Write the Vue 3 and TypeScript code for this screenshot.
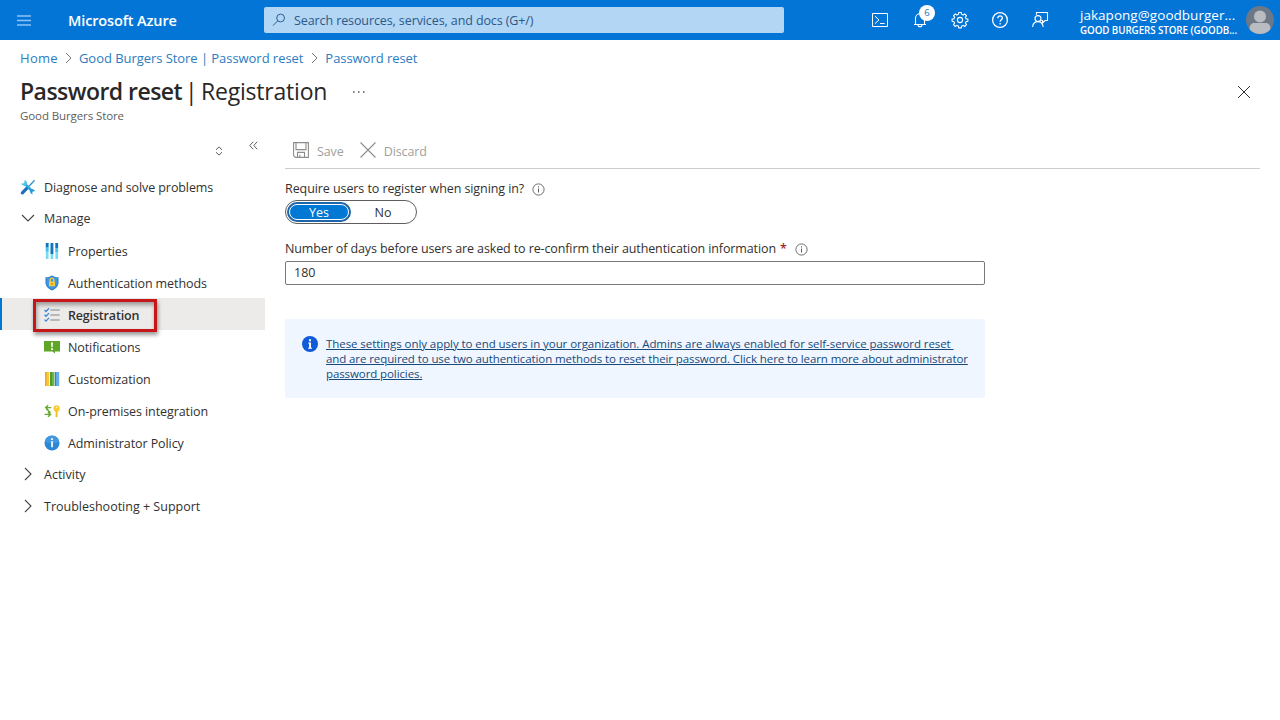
<script setup lang="ts">
import { ref } from 'vue'

interface NavItem { label: string; icon: string }

const items: NavItem[] = [
  { label: 'Properties', icon: 'bars' },
  { label: 'Authentication methods', icon: 'shield' },
  { label: 'Registration', icon: 'checks' },
  { label: 'Notifications', icon: 'alert' },
  { label: 'Customization', icon: 'books' },
  { label: 'On-premises integration', icon: 'sync' },
  { label: 'Administrator Policy', icon: 'info' },
]
const sections: string[] = ['Activity', 'Troubleshooting + Support']
const active = ref('Registration')
const required = ref(true)
const days = ref('180')
</script>

<template>
  <div class="page">
    <header class="topbar">
      <svg class="burger" width="14" height="11" viewBox="0 0 14 11"><path d="M0 1h14M0 5.5h14M0 10h14" stroke="#8fc4f3" stroke-width="1.5" /></svg>
      <span class="brand">Microsoft Azure</span>
      <div class="search">
        <svg width="14" height="14" viewBox="0 0 14 14" fill="none" stroke="#2b5f95"><circle cx="8.6" cy="5" r="3.9" /><path d="M5.8 7.8 1 12.6" /></svg>
        <span>Search resources, services, and docs (G+/)</span>
      </div>
      <div class="actions">
        <svg width="40" height="40" viewBox="0 0 40 40" fill="none" stroke="#fff"><path d="M12.5 13.5h15v13h-15zM15 16.2l4 3.7-4 3.7M20 23.5h4.6" /></svg>
        <div class="bell">
          <svg width="40" height="40" viewBox="0 0 40 40" fill="none" stroke="#fff" stroke-width="1.1"><path d="M14 24.5h12M15.5 24.2V18.2a4.5 4.5 0 0 1 9 0v6M18 24.7a2 2 0 0 0 4 0" /></svg>
          <span class="badge">6</span>
        </div>
        <svg width="40" height="40" viewBox="0 0 40 40" fill="none" stroke="#fff" stroke-width="1.1" stroke-linejoin="round"><circle cx="20" cy="20" r="2.6" /><path d="M18.7 12.5h2.6l.3 1.8 1.6.7 1.5-1.1 1.8 1.8-1.1 1.5.7 1.6 1.8.3v2.2l-1.8.3-.7 1.6 1.1 1.5-1.8 1.8-1.5-1.1-1.6.7-.3 1.8h-2.6l-.3-1.8-1.6-.7-1.5 1.1-1.8-1.8 1.1-1.5-.7-1.6-1.8-.3v-2.2l1.8-.3.7-1.6-1.1-1.5 1.8-1.8 1.5 1.1 1.6-.7z" /></svg>
        <svg width="40" height="40" viewBox="0 0 40 40" fill="none" stroke="#fff" stroke-width="1.3"><circle cx="20" cy="20" r="7.4" /><path d="M17.8 18.3c0-3.2 4.6-3.1 4.6-.3 0 1.7-2.3 1.9-2.3 3.8M20.1 23v1.5" /></svg>
        <svg width="40" height="40" viewBox="0 0 40 40" fill="none" stroke="#fff" stroke-width="1.1"><path d="M16.5 14.8v-2.3h11v8h-2.3L22.6 23v-2.5h-1.3" /><circle cx="18" cy="18.6" r="3" /><path d="M12.6 27c.3-3.5 2.4-5.4 5.4-5.4 2.9 0 4.8 1.9 5.2 5.4" /></svg>
      </div>
      <div class="account">
        <span class="mail">jakapong@goodburger...</span>
        <span class="tenant">GOOD BURGERS STORE (GOODB...</span>
      </div>
      <svg class="avatar" width="28" height="28" viewBox="0 0 28 28">
        <defs><clipPath id="avatar-clip"><circle cx="14" cy="14" r="14" /></clipPath></defs>
        <g clip-path="url(#avatar-clip)"><rect width="28" height="28" fill="#6d7887" /><circle cx="14" cy="10.5" r="6" fill="#b9bdc1" /><path d="M3.6 28v-5.6c0-3.4 2.2-5.3 5-5.3h10.8c2.8 0 5 1.9 5 5.3V28z" fill="#b9bdc1" /></g>
      </svg>
    </header>

    <nav class="crumbs">
      <a class="c-home">Home</a>
      <svg width="7" height="12" viewBox="0 0 7 12" fill="none" stroke="#77797c"><path d="M1 1l5 5-5 5" /></svg>
      <a class="c-store">Good Burgers Store | Password reset</a>
      <svg width="7" height="12" viewBox="0 0 7 12" fill="none" stroke="#77797c"><path d="M1 1l5 5-5 5" /></svg>
      <a class="c-reset">Password reset</a>
    </nav>

    <div class="heading">
      <h1><span class="t-main">Password reset</span><span class="t-sub">| Registration</span></h1>
      <svg class="more" width="12" height="2" viewBox="0 0 12 2" fill="#55534f"><path d="M0 .2h1.5v1.5H0zM5 .2h1.5v1.5H5zM10 .2h1.5v1.5H10z" /></svg>
      <svg class="close" width="14" height="14" viewBox="0 0 14 14" stroke="#323130"><path d="M1 1l12 12M13 1 1 13" /></svg>
    </div>
    <div class="subtitle"><span>Good Burgers Store</span></div>

    <div class="body">
      <aside>
        <div class="side-tools">
          <svg class="sorter" width="8" height="10" viewBox="0 0 8 10" fill="none" stroke="#605e5c"><path d="M1 3.8 4 .9l3 2.9M1 6.2l3 2.9 3-2.9" /></svg>
          <svg class="fold" width="9" height="9" viewBox="0 0 9 9" fill="none" stroke="#605e5c"><path d="M4.2.7.8 4.5l3.4 3.8M8.2.7 4.8 4.5l3.4 3.8" /></svg>
        </div>
        <div class="row top">
          <svg width="16" height="16" viewBox="0 0 16 16"><path d="M14.6 1.2 9 7.2" stroke="#3f8fcb" stroke-width="1.3" /><path d="M2.4 13.9 7.2 8.8" stroke="#1f6fbd" stroke-width="3.2" stroke-linecap="round" /><path d="M4.5 4.5l7.7 7.7" stroke="#2aa5dc" stroke-width="2.6" /><path d="M1 4.3l1.9.5L4.7 3 4.2 1a3.6 3.6 0 0 1 2.6 5A3.8 3.8 0 0 1 1 4.3z" fill="#4cc3ea" /><path d="M15.2 12.2l-2 .1-1 1.1.5 2a3.7 3.7 0 0 1-2.7-4.9 3.6 3.6 0 0 1 5.2 1.7z" fill="#2a9bd8" /></svg>
          <span>Diagnose and solve problems</span>
        </div>
        <div class="row group">
          <svg width="16" height="16" viewBox="0 0 16 16" fill="none" stroke="#484644" stroke-width="1.1"><path d="M2 5l6 6 6-6" /></svg>
          <span>Manage</span>
        </div>
        <div v-for="item in items" :key="item.label" class="row child" :class="{ active: item.label === active }" @click="active = item.label">
          <svg v-if="item.icon === 'bars'" width="16" height="16" viewBox="0 0 16 16"><path d="M1.8 0h2.7v16H1.8zM6.6 0h2.7v16H6.6zM11.4 0h2.7v16h-2.7z" fill="#76dcf3" /><path d="M1.8 0h2.7v4.5H1.8zM6.6 0h2.7v11H6.6zM11.4 0h2.7v5h-2.7z" fill="#1673b9" /><path d="M1.8 4.5h2.7v4H1.8zM11.4 5h2.7v4h-2.7z" fill="#4bbfe6" /></svg>
          <svg v-else-if="item.icon === 'shield'" width="16" height="16" viewBox="0 0 16 16"><path d="M8 .5c2 1.4 4.2 1.7 6.5 1.8v5.2c0 4.2-3.5 6.7-6.5 8.1-3-1.4-6.5-3.9-6.5-8.1V2.3C3.8 2.2 6 1.9 8 .5z" fill="#277fcb" /><path d="M8 1.7c1.8 1 3.5 1.4 5.4 1.5v4.3c0 3.4-2.7 5.6-5.4 6.9-2.7-1.3-5.4-3.5-5.4-6.9V3.2c1.9-.1 3.6-.5 5.4-1.5z" fill="#4299df" /><path d="M5 6.5h6v4.7H5z" fill="#f5c93d" /><path d="M6.2 7V5a1.8 1.8 0 0 1 3.6 0v2" fill="none" stroke="#f5c93d" stroke-width="1.3" /><path d="M8 8.2v1.5" stroke="#9a7512" /></svg>
          <svg v-else-if="item.icon === 'checks'" width="16" height="16" viewBox="0 0 16 16" fill="none"><path d="M.5 3 2 4.5 5 1.3M.5 7.8 2 9.3 5 6.1M.5 12.6 2 14.1 5 10.9" stroke="#3c87d6" stroke-width="1.3" /><path d="M6.3 3h9.4M6.3 8h9.4M6.3 13h9.4" stroke="#a3a6a9" stroke-width="1.5" /></svg>
          <svg v-else-if="item.icon === 'alert'" width="16" height="16" viewBox="0 0 16 16"><path d="M0 2h16v10.5h-5v2.2l-2.3-2.2H0z" fill="#5fa628" /><path d="M7 3.4h2l-.4 4.9H7.4zM7.1 9.2h1.8V11H7.1z" fill="#fff" /></svg>
          <svg v-else-if="item.icon === 'books'" width="16" height="16" viewBox="0 0 16 16"><path d="M1 1h4.3v14H1z" fill="#f7c63a" /><path d="M1 1h1.5v14H1z" fill="#eea726" /><path d="M6 1h4.2v14H6z" fill="#4b9c2a" /><path d="M8.2 1h2v14h-2z" fill="#73b842" /><path d="M10.9 1h4.3v14h-4.3z" fill="#68ace9" /><path d="M10.9 1h1.2v14h-1.2z" fill="#2f80cf" /></svg>
          <svg v-else-if="item.icon === 'sync'" width="16" height="16" viewBox="0 0 16 16"><path d="M7.2 4.6H1.8M4.2 2.2 1.7 4.6 4.2 7M2 5.4l4.5 4.4M.6 11.4h5.4M4 9 6.5 11.4 4 13.8" fill="none" stroke="#65aa2c" stroke-width="1.4" /><circle cx="12.6" cy="5.4" r="3.2" fill="#f8cd35" /><path d="M11.6 8h2v5.4l-1 1.2-1-1.2z" fill="#f3be2a" /><circle cx="12.6" cy="4.2" r=".8" fill="#fff4c4" /></svg>
          <svg v-else width="16" height="16" viewBox="0 0 16 16"><circle cx="8" cy="8" r="7.5" fill="#2c88d5" /><path d="M.7 6.5A7.5 7.5 0 0 1 15.3 6.5C11 8.5 5 8.5.7 6.5z" fill="#4399df" /><path d="M7.2 6.3h1.7v6H7.2zM7.2 3.3h1.7V5H7.2z" fill="#fff" /></svg>
          <span>{{ item.label }}</span>
        </div>
        <div v-for="s in sections" :key="s" class="row group">
          <svg width="16" height="16" viewBox="0 0 16 16" fill="none" stroke="#484644" stroke-width="1.1"><path d="M5 2l6 6-6 6" /></svg>
          <span>{{ s }}</span>
        </div>
      </aside>

      <main>
        <div class="toolbar">
          <svg width="16" height="16" viewBox="0 0 16 16" fill="none" stroke="#8f8d8b" stroke-width="1.1"><path d="M.6.6h14.8v14.8H2.4L.6 13.6zM3 .6v7h10v-7M4.5 15.4v-5h7v5M6.8 15.4v-2.7" /></svg>
          <span class="b-save">Save</span>
          <svg class="x" width="16" height="16" viewBox="0 0 16 16" stroke="#8f8d8b" stroke-width="1.1"><path d="M.5.5l15 15M15.5.5l-15 15" /></svg>
          <span class="b-discard">Discard</span>
        </div>

        <div class="label first">
          <span class="l-require">Require users to register when signing in?</span>
          <svg width="13" height="13" viewBox="0 0 13 13" fill="none" stroke="#605e5c"><circle cx="6.5" cy="6.5" r="5.6" stroke-width=".9" /><path d="M6.5 5.5v4M6.5 3.3v1.2" /></svg>
        </div>
        <div class="toggle">
          <button :class="{ on: required }" @click="required = true"><span>Yes</span></button>
          <button :class="{ on: !required }" @click="required = false"><span>No</span></button>
        </div>

        <div class="label second">
          <span class="l-days">Number of days before users are asked to re-confirm their authentication information</span>
          <b>*</b>
          <svg width="13" height="13" viewBox="0 0 13 13" fill="none" stroke="#605e5c"><circle cx="6.5" cy="6.5" r="5.6" stroke-width=".9" /><path d="M6.5 5.5v4M6.5 3.3v1.2" /></svg>
        </div>
        <input v-model="days" class="field" type="text" />

        <div class="notice">
          <svg width="16" height="16" viewBox="0 0 16 16"><circle cx="8" cy="8" r="8" fill="#0f5bd8" /><path d="M6.2 6.5H9v5.2h1v1.1H6.1v-1.1h1V7.6h-.9zM7 3.2h2v2H7z" fill="#fff" /></svg>
          <a>
            <span class="p1">These settings only apply to end users in your organization. Admins are always enabled for self-service password reset&nbsp;</span><br />
            <span class="p2">and are required to use two authentication methods to reset their password. Click here to learn more about administrator</span><br />
            <span class="p2">password policies.</span>
          </a>
        </div>
      </main>
    </div>
  </div>
</template>

<style>
body { margin: 0; background: #fff; overflow: hidden; }
</style>

<style scoped>
* { box-sizing: border-box; }
.page { width: 1280px; height: 720px; background: #fff; color: #323130; font: 12.5px/16px "Open Sans", "Noto Sans", sans-serif; white-space: nowrap; }
svg { flex: none; display: block; }

.topbar { display: flex; align-items: center; height: 40px; background: #0375d7; color: #fff; }
.burger { margin-left: 17px; }
.brand { width: 196px; margin-left: 37px; padding-top: 2px; font-size: 14.5px; font-weight: 600; line-height: 20px; letter-spacing: -.13px; }
.search { display: flex; align-items: center; gap: 8px; width: 520px; height: 26px; padding-left: 8px; border-radius: 2px; background: #b3d6f4; color: #2c5888; letter-spacing: -.1px; }
.search span { padding-top: 2px; }
.actions { display: flex; margin-left: 76px; }
.bell { position: relative; }
.badge { position: absolute; left: 19px; top: 5px; width: 16px; height: 16px; border-radius: 50%; background: #fff; color: #1b6fbd; font-size: 9.5px; line-height: 16px; text-align: center; }
.account { display: flex; flex: none; flex-direction: column; width: 186px; padding: 5px 0 0 20px; }
.mail { font-size: 13.5px; line-height: 16px; letter-spacing: .03px; }
.tenant { font-size: 9.8px; font-weight: 600; line-height: 16px; letter-spacing: -.08px; }

.crumbs { display: flex; align-items: center; gap: 7px; height: 36px; padding-left: 20px; color: #2b7cc1; font-size: 13px; }
.c-home { letter-spacing: .3px; }
.c-store { letter-spacing: -.05px; }
.c-reset { letter-spacing: -.05px; }
.crumbs svg:nth-of-type(2) { margin-left: 1px; }
.heading { display: flex; align-items: center; height: 31px; padding: 0 29px 0 20px; }
h1 { display: flex; gap: 3px; width: 308px; margin: -2px 0 0; font-size: 23px; line-height: 30px; font-weight: 400; color: #292827; }
.t-main { font-weight: 600; letter-spacing: -.54px; }
.t-sub { letter-spacing: -.2px; word-spacing: -2.3px; }
.more { margin-left: 25px; }
.close { margin-left: auto; }
.subtitle { height: 23px; padding: 1px 0 0 20px; font-size: 11.5px; color: #605e5c; letter-spacing: -.1px; }

.body { display: flex; gap: 20px; }
aside { width: 265px; }
.side-tools { display: flex; gap: 26px; height: 40px; padding: 16px 0 0 215px; }
.fold { margin-top: -5px; }
.row { display: flex; align-items: center; gap: 8px; height: 32px; padding-left: 20px; }
.row span { padding-top: 2px; letter-spacing: -.09px; }
.top { padding-top: 2px; }
.group span { letter-spacing: 0; }
.child { padding: 2px 0 0 44px; }
.active { position: relative; background: #edebe9; font-weight: 600; border-left: 2px solid #0078d4; padding-left: 42px; }
.active::after { content: ""; position: absolute; box-sizing: border-box; left: 31px; top: 1px; width: 124px; height: 33px; border: 3px solid #c5161a; box-shadow: 1px 3px 4px rgba(0,0,0,.4), inset 1px 3px 4px rgba(0,0,0,.35); }
.active span { letter-spacing: -.17px; }

main { width: 975px; }
.toolbar { display: flex; align-items: center; height: 39px; padding: 2px 0 0 8px; border-bottom: 1px solid #cfcdcb; color: #a19f9d; }
.toolbar span { padding-top: 3px; letter-spacing: -.1px; }
.b-save { margin-left: 8px; }
.x { margin-left: 16px; }
.b-discard { margin-left: 8px; }
.label { display: flex; align-items: center; height: 20px; }
.label svg { margin: 0 0 0 8px; }
.first { margin-top: 10px; }
.l-require { letter-spacing: -.08px; }
.l-days { letter-spacing: -.115px; }
.second { margin-top: 15px; }
.label b { margin-left: 4px; color: #a4262c; font-weight: 600; }
.toggle { display: flex; width: 132px; height: 24px; margin-top: 1px; padding: 1px; border: 1px solid #605e5c; border-radius: 12px; }
.toggle button { display: flex; width: 65px; height: 20px; padding: 2px; border: 0; border-radius: 10px; background: transparent; color: #323130; font: inherit; }
.toggle span { flex: 1; height: 16px; border-radius: 8px; line-height: 17px; text-align: center; }
.toggle .on { background: #1d66ac; color: #fff; }
.toggle .on span { border: 1px solid #fff; background: #0078d4; line-height: 15px; }
.field { display: block; width: 700px; height: 24px; margin-top: 2px; padding: 0 8px 2px; border: 1px solid #7b7977; border-radius: 2px; outline: 0; color: #323130; font: inherit; }
.notice { display: flex; gap: 8px; width: 700px; height: 79px; margin-top: 34px; padding: 17px; background: #f0f6ff; border-radius: 2px; }
.notice a { color: #174a7a; font-size: 11.5px; line-height: 15px; text-decoration: underline; text-underline-offset: 1px; text-decoration-thickness: 1px; }
.p1 { letter-spacing: -.068px; }
.p2 { letter-spacing: -.097px; }
</style>
